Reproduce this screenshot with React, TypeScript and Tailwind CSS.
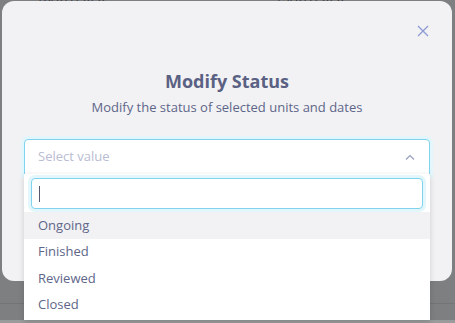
import React from "react";

export default function App() {
  const options = ["Ongoing", "Finished", "Reviewed", "Closed"];
  return (
    <div
      className="relative w-[455px] h-[323px] overflow-hidden bg-[#7e7f80]"
      style={{ fontFamily: '"Open Sans", "Noto Sans", sans-serif' }}
    >
      {/* background page remnants */}
      <div className="absolute left-0 top-[-12px] w-full flex text-[13px] text-[#3a3d44]">
        <span className="ml-[36px]">18/07/2026</span>
        <span className="ml-[170px]">15/07/2026</span>
      </div>
      <div className="absolute left-0 top-[303px] w-full h-px bg-[#737475]" />
      <div className="absolute left-0 top-[313px] w-full flex text-[13px] text-[#55585e]">
        <span className="ml-[36px]">18/07/2026</span>
        <span className="ml-[170px]">15/07/2026</span>
      </div>
      <div className="absolute left-0 top-[320px] w-full h-[3px] bg-[#9a9b9c]" />

      {/* modal */}
      <div className="absolute left-[2px] top-[1px] w-[450px] h-[280px] rounded-[12px] bg-[#f2f2f4]">
        <button className="absolute right-[23px] top-[24px] text-[#8d9bd3]">
          <svg width="12" height="12" viewBox="0 0 12 12" fill="none" stroke="currentColor" strokeWidth="1.3">
            <path d="M1 1L11 11M11 1L1 11" />
          </svg>
        </button>
        <div className="flex flex-col items-center pt-[68px]">
          <h2 className="text-[18px] leading-[24px] font-bold text-[#5a6183]">Modify Status</h2>
          <p className="mt-[5px] text-[13px] leading-[18px] text-[#5e6689]">
            Modify the status of selected units and dates
          </p>
        </div>
        <div className="relative mx-[22px] mt-[23px]">
          <div className="h-[36px] flex items-center justify-between px-[13px] bg-white border border-[#7fd3ef] rounded-t-[4px] shadow-[0_0_0_3px_#e3f6fc]">
            <span className="text-[13px] text-[#b9bcd2]">Select value</span>
            <svg width="10" height="6" viewBox="0 0 10 6" fill="none" stroke="#9aa0bf" strokeWidth="1.2" className="mr-[1px]">
              <path d="M1 5.5L5 1.5L9 5.5" />
            </svg>
          </div>
          <div className="absolute left-0 top-[35px] w-full bg-white shadow-[0_2px_6px_rgba(0,0,0,0.15)] pb-[2px]">
            <div className="px-[7px] pt-[4px] pb-[3px]">
              <div className="h-[31px] flex items-center px-[7px] bg-white border border-[#7fd3ef] rounded-[4px] shadow-[0_0_0_3px_#e3f6fc]">
                <span className="w-px h-[16px] bg-[#555a70]" />
              </div>
            </div>
            {options.map((o, i) => (
              <div
                key={o}
                className={`h-[26.5px] flex items-center px-[14px] text-[13px] text-[#5e6689] ${i === 0 ? "bg-[#f2f2f4]" : ""}`}
              >
                {o}
              </div>
            ))}
          </div>
        </div>
      </div>
    </div>
  );
}
